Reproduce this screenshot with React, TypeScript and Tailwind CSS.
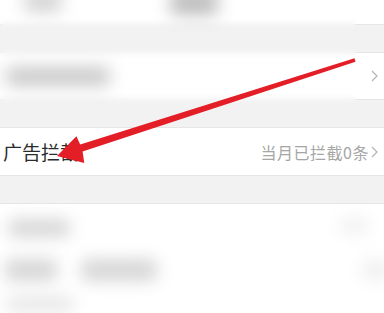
import React from 'react';

const Chevron = ({ className }: { className?: string }) => (
  <svg viewBox="0 0 7 12" className={className} fill="none" stroke="currentColor" strokeWidth="1.2">
    <polyline points="1,1 6,6 1,11" />
  </svg>
);

const Blob = ({ className }: { className: string }) => (
  <div className={`rounded-md blur-[8px] ${className}`} />
);

export default function App() {
  return (
    <div
      className="relative w-[384px] h-[313px] overflow-hidden bg-[#f2f2f2]"
      style={{ fontFamily: '"Noto Sans CJK SC", "Noto Sans", sans-serif' }}
    >
      {/* top row, mostly cut off */}
      <div className="h-[25px] bg-white border-b border-[#e6e6e6] flex items-start">
        <Blob className="ml-[24px] mt-[-6px] w-[38px] h-[17px] bg-[#cccccc]" />
        <Blob className="ml-[108px] mt-[-6px] w-[48px] h-[20px] bg-[#b5b5b5]" />
      </div>

      <div className="h-[27px]" />

      <div className="h-[48px] bg-white border-y border-[#e6e6e6] flex items-center justify-between pl-[6px] pr-[6px]">
        <Blob className="w-[104px] h-[19px] bg-[#c8c8c8]" />
        <Chevron className="w-[7px] h-[12px] text-[#b3b3b3]" />
      </div>

      <div className="h-[27px]" />

      <div className="h-[49px] bg-white border-y border-[#e6e6e6] flex items-center justify-between pl-[3px] pr-[6px]">
        <span className="text-[19px] leading-none text-[#2b2b2b]">广告拦截</span>
        <div className="flex items-center gap-[2px] text-[#a6a6a6]">
          <span className="text-[16px] leading-none tracking-[0.5px]">当月已拦截0条</span>
          <Chevron className="w-[7px] h-[12px] text-[#b3b3b3]" />
        </div>
      </div>

      <div className="h-[27px]" />

      {/* lower list */}
      <div className="bg-white border-t border-[#e6e6e6] h-[120px] relative">
        <div className="flex justify-between pt-[15px] pl-[8px] pr-[16px]">
          <Blob className="w-[62px] h-[18px] bg-[#d6d6d6]" />
          <Blob className="w-[28px] h-[14px] bg-[#eeeeee]" />
        </div>
        <div className="flex items-center pt-[22px] pl-[5px]">
          <Blob className="w-[52px] h-[22px] bg-[#d6d6d6]" />
          <Blob className="ml-[24px] w-[76px] h-[22px] bg-[#d6d6d6]" />
          <div className="flex-1" />
          <Blob className="w-[28px] h-[20px] bg-[#f0f0f0] mr-[-6px]" />
        </div>
        <div className="pt-[16px] pl-[6px]">
          <Blob className="w-[68px] h-[14px] bg-[#e4e4e4]" />
        </div>
      </div>

      {/* blur over the hidden parts */}
      <div className="absolute left-0 top-0 w-[356px] h-[112px] backdrop-blur-[3px]" />
      <div className="absolute left-0 right-0 top-[207px] bottom-0 backdrop-blur-[2px]" />

      {/* red pointer arrow */}
      <svg className="absolute inset-0 pointer-events-none" width="384" height="313" viewBox="0 0 384 313">
        <polygon
          points="354.5,58.3 80.2,144.6 76.4,136.3 57,156 84.3,163.1 82.6,151.4 355.5,61.7"
          fill="#e31e26"
        />
      </svg>
    </div>
  );
}
